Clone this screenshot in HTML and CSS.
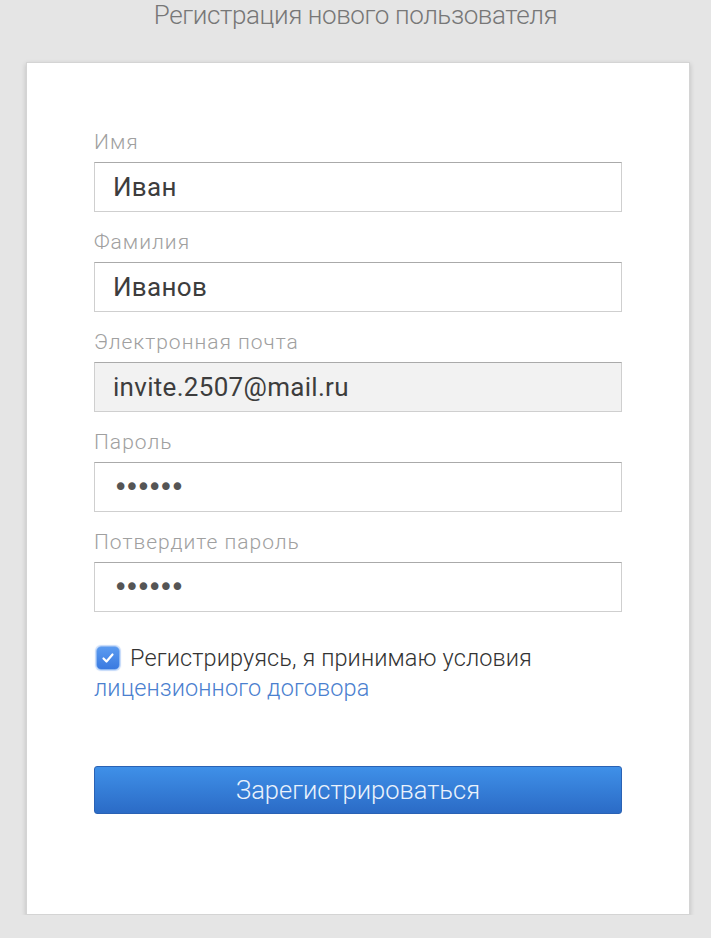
FILE: index.html
```html
<!DOCTYPE html>
<html lang="ru">
<head>
  <meta charset="UTF-8" />
  <meta name="viewport" content="width=device-width, initial-scale=1.0" />
  <title>Регистрация</title>
  <link rel="stylesheet" href="styles.css">
</head>
<body>

  <h1 class="page-title">Регистрация нового пользователя</h1>

  <div class="card">
    <form class="reg-form">
      <label class="field-label" for="firstName">Имя</label>
      <input class="field" type="text" id="firstName" value="Иван" />

      <label class="field-label" for="lastName">Фамилия</label>
      <input class="field" type="text" id="lastName" value="Иванов" />

      <label class="field-label" for="email">Электронная почта</label>
      <input class="field field-readonly" type="text" id="email" value="invite.2507@mail.ru" readonly />

      <label class="field-label" for="password">Пароль</label>
      <input class="field field-pass" type="password" id="password" value="123456" />

      <label class="field-label" for="password2">Потвердите пароль</label>
      <input class="field field-pass" type="password" id="password2" value="123456" />

      <div class="agree">
        <span class="agree-line">
          <span class="checkbox">
            <svg width="16" height="16" viewBox="0 0 16 16"><path d="M3.5 8.5l3 3L12.5 4.5" fill="none" stroke="#fff" stroke-width="2.2" stroke-linecap="round" stroke-linejoin="round"/></svg>
          </span>
          Регистрируясь, я принимаю условия
        </span>
        <a href="#">лицензионного договора</a>
      </div>

      <button type="submit" class="submit-btn">Зарегистрироваться</button>
    </form>
  </div>

</body>
</html>
```

FILE: styles.css
```css
* { margin: 0; padding: 0; box-sizing: border-box; }
body {
  font-family: Roboto, "Liberation Sans", sans-serif;
  background-color: #e5e5e5;
  color: #333;
}
.page-title {
  font-weight: 300;
  font-size: 26px;
  letter-spacing: -0.4px;
  line-height: 30px;
  color: #777;
  text-align: center;
}
.card {
  width: 664px;
  height: 853px;
  margin: 32px 0 0 26px;
  background-color: #fff;
  border: 1px solid #d4d4d4;
  box-shadow: 0 2px 5px rgba(0, 0, 0, 0.18);
  padding: 65px 67px 0 67px;
}
.reg-form {
  display: flex;
  flex-direction: column;
}
.field-label {
  font-weight: 300;
  font-size: 21px;
  letter-spacing: 1px;
  line-height: 28px;
  color: #a0a0a0;
}
.field {
  height: 50px;
  margin: 6px 0 16px;
  padding: 0 18px;
  border: 1px solid #cfcfcf;
  border-top-color: #aaa;
  font-family: Roboto, "Liberation Sans", sans-serif;
  font-size: 26px;
  letter-spacing: 0.3px;
  color: #3d3d3d;
  background-color: #fff;
  outline: none;
}
.field-readonly {
  background-color: #f2f2f2;
}
.field-pass {
  font-family: "DejaVu Sans", sans-serif;
  font-size: 26px;
  letter-spacing: -4px;
  color: #555;
}
.agree {
  margin-top: 15px;
  font-size: 23.5px;
  letter-spacing: 0.1px;
  font-weight: 300;
  line-height: 30px;
}
.agree-line {
  display: flex;
  align-items: center;
  gap: 10px;
  color: #333;
}
.checkbox {
  width: 24px;
  height: 24px;
  margin-left: 2px;
  border-radius: 5px;
  background: linear-gradient(#5b9bf0, #3a7ae0);
  border: 1px solid #8db7f2;
  box-shadow: 0 0 1px 1px rgba(90, 150, 240, 0.35);
  display: flex;
  align-items: center;
  justify-content: center;
}
.agree a {
  color: #4a80cf;
  text-decoration: none;
}
.submit-btn {
  margin-top: 63px;
  height: 48px;
  border: 1px solid #2a62b4;
  border-radius: 3px;
  background: linear-gradient(#3f90e8, #2b6bc6);
  color: #eaf2fc;
  font-family: Roboto, "Liberation Sans", sans-serif;
  font-weight: 300;
  font-size: 25.5px;
  cursor: pointer;
}
```
